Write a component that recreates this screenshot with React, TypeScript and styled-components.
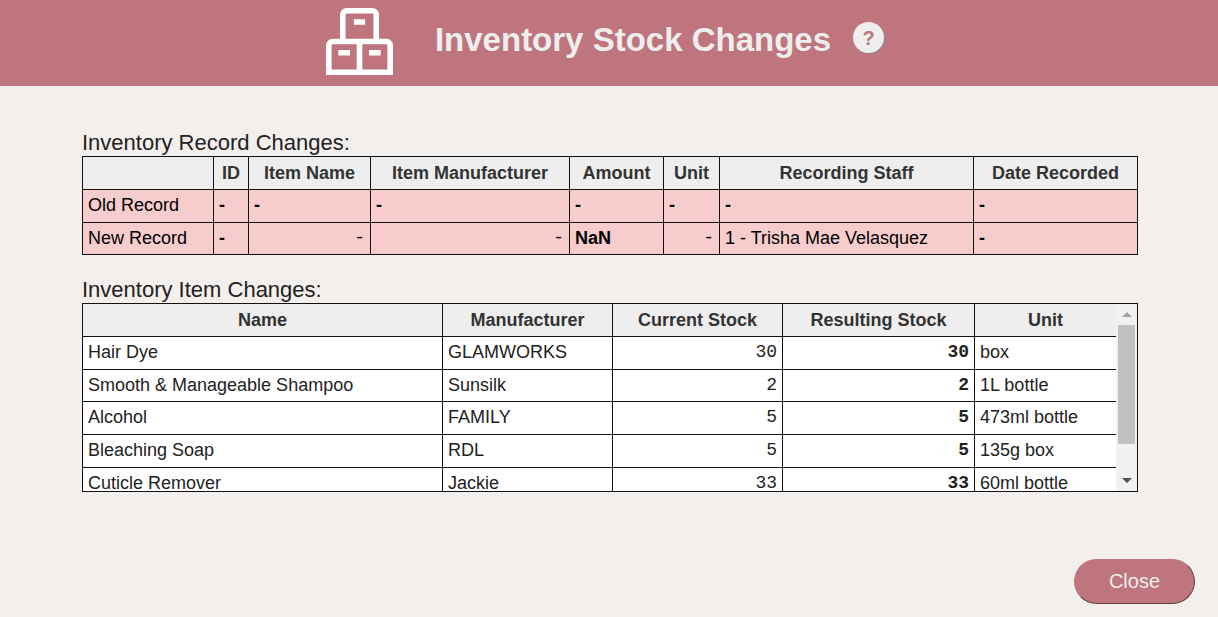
import React, { useRef } from 'react';
import styled, { createGlobalStyle } from 'styled-components';

const GlobalStyle = createGlobalStyle`
  *, *::before, *::after { box-sizing: border-box; }
  body {
    margin: 0;
    background: #f3efec;
    color: #222;
    font-family: "Liberation Sans", Arial, sans-serif;
    font-size: 18px;
    line-height: 20px;
  }
`;

const Page = styled.div`
  min-height: 100vh;
  display: flex;
  flex-direction: column;
`;

const Header = styled.header`
  display: flex;
  justify-content: center;
  align-items: flex-start;
  padding: 8px 8px 11px 0;
  background: #bf757d;
`;

const BoxesIcon = styled.svg`
  width: 67px;
  height: 67px;
  flex: none;
`;

const Title = styled.h1`
  margin: 12px 22px 0 42px;
  color: #eee;
  font-size: 33px;
  line-height: 40px;
`;

const HelpButton = styled.button`
  width: 31px;
  height: 31px;
  margin-top: 14px;
  padding: 0;
  border: 0;
  border-radius: 50%;
  background: #eee;
  box-shadow: 1px 1px 1px #8a8a8a;
  color: #bf757d;
  font: bold 20px/30px "Liberation Sans", Arial, sans-serif;
`;

const Main = styled.main`
  display: flex;
  flex-direction: column;
  gap: 22px;
  padding: 44px 80px 24px 82px;
`;

const SectionTitle = styled.h2`
  margin: 0;
  font-size: 22px;
  font-weight: 400;
  line-height: 26px;
`;

const Frame = styled.div<{ $height?: number }>`
  display: flex;
  height: ${(p) => (p.$height ? `${p.$height}px` : 'auto')};
  border: 1px solid #111;
  border-bottom-width: ${(p) => (p.$height ? 1 : 0)}px;
  background: #fff;
`;

const Scroller = styled.div`
  flex: 1;
  min-width: 0;
  overflow-y: auto;
  scrollbar-width: none;
`;

const Table = styled.table`
  width: 100%;
  table-layout: fixed;
  border-collapse: separate;
  border-spacing: 0;

  th, td {
    height: 33px;
    border-right: 1px solid #111;
    border-bottom: 1px solid #111;
  }
  tr > :last-child { border-right: 0; }
  tbody tr:nth-child(2) > * { height: 32px; }
`;

const HeadCell = styled.th`
  padding: 0 5px;
  background: #eee;
  color: #333;
  text-align: center;
`;

const Cell = styled.td<{ $changed?: boolean; $numeric?: boolean; $bold?: boolean }>`
  padding: 0 5px 2px;
  background: ${(p) => (p.$changed ? '#f6cccc' : '#fff')};
  color: ${(p) => (p.$changed ? '#000' : '#222')};
  font-family: ${(p) => (p.$numeric ? '"Liberation Mono", "Courier New", monospace' : 'inherit')};
  font-weight: ${(p) => (p.$bold ? 700 : 400)};
  text-align: ${(p) => (p.$numeric ? 'right' : 'left')};
  white-space: nowrap;
`;

const RowHead = styled(Cell).attrs({ as: 'th', scope: 'row' })``;

const ScrollBar = styled.div`
  display: flex;
  flex-direction: column;
  width: 21px;
  padding: 0 2px;
  background: #f1f1f1;
`;

const ScrollButton = styled.button`
  display: flex;
  align-items: center;
  justify-content: center;
  height: 21px;
  padding: 0;
  border: 0;
  background: transparent;
`;

const Track = styled.div`
  flex: 1;
`;

const Thumb = styled.div`
  height: 82%;
  background: #c1c1c1;
`;

const Footer = styled.footer`
  display: flex;
  justify-content: flex-end;
  margin-top: auto;
  padding: 0 23px 13px;
`;

const CloseButton = styled.button`
  width: 121px;
  height: 45px;
  padding: 0 0 2px;
  border: 1px outset #bf757d;
  border-radius: 23px;
  background: #bf757d;
  color: #eee;
  font: 20px/24px "Liberation Sans", Arial, sans-serif;
`;

type Column = { label: string; width: number };

const recordColumns: Column[] = [
  { label: '', width: 131 },
  { label: 'ID', width: 35 },
  { label: 'Item Name', width: 122 },
  { label: 'Item Manufacturer', width: 199 },
  { label: 'Amount', width: 94 },
  { label: 'Unit', width: 56 },
  { label: 'Recording Staff', width: 254 },
  { label: 'Date Recorded', width: 163 },
];

const itemColumns: Column[] = [
  { label: 'Name', width: 360 },
  { label: 'Manufacturer', width: 170 },
  { label: 'Current Stock', width: 170 },
  { label: 'Resulting Stock', width: 192 },
  { label: 'Unit', width: 141 },
];

const items = [
  { name: 'Hair Dye', maker: 'GLAMWORKS', current: 30, result: 30, unit: 'box' },
  { name: 'Smooth & Manageable Shampoo', maker: 'Sunsilk', current: 2, result: 2, unit: '1L bottle' },
  { name: 'Alcohol', maker: 'FAMILY', current: 5, result: 5, unit: '473ml bottle' },
  { name: 'Bleaching Soap', maker: 'RDL', current: 5, result: 5, unit: '135g box' },
  { name: 'Cuticle Remover', maker: 'Jackie', current: 33, result: 33, unit: '60ml bottle' },
];

function TableHead({ columns }: { columns: Column[] }) {
  return (
    <>
      <colgroup>
        {columns.map((c) => (
          <col key={c.label} width={c.width} />
        ))}
      </colgroup>
      <thead>
        <tr>
          {columns.map((c) => (
            <HeadCell key={c.label} scope="col">{c.label}</HeadCell>
          ))}
        </tr>
      </thead>
    </>
  );
}

export default function App() {
  const scroller = useRef<HTMLDivElement>(null);
  const scrollBy = (top: number) => scroller.current?.scrollBy({ top });

  return (
    <Page>
      <GlobalStyle />
      <Header>
        <BoxesIcon viewBox="0 0 24 24" fill="none" stroke="#fff" strokeWidth="2" aria-hidden="true">
          <path d="M6 12V2.4A1.4 1.4 0 0 1 7.4 1h9.2A1.4 1.4 0 0 1 18 2.4V12" />
          <path d="M1 23V13.4A1.4 1.4 0 0 1 2.4 12h19.2a1.4 1.4 0 0 1 1.4 1.4V23zM12 12v11" />
          <path d="M10 5h4M4.4 16h4.2M15.4 16h4.2" />
        </BoxesIcon>
        <Title>Inventory Stock Changes</Title>
        <HelpButton type="button" aria-label="Help">?</HelpButton>
      </Header>

      <Main>
        <section aria-labelledby="record-title">
          <SectionTitle id="record-title">Inventory Record Changes:</SectionTitle>
          <Frame>
            <Table aria-labelledby="record-title">
              <TableHead columns={recordColumns} />
              <tbody>
                <tr>
                  <RowHead $changed>Old Record</RowHead>
                  <Cell $changed $bold>-</Cell>
                  <Cell $changed $bold>-</Cell>
                  <Cell $changed $bold>-</Cell>
                  <Cell $changed $bold>-</Cell>
                  <Cell $changed $bold>-</Cell>
                  <Cell $changed $bold>-</Cell>
                  <Cell $changed $bold>-</Cell>
                </tr>
                <tr>
                  <RowHead $changed>New Record</RowHead>
                  <Cell $changed $bold>-</Cell>
                  <Cell $changed $numeric>-</Cell>
                  <Cell $changed $numeric>-</Cell>
                  <Cell $changed $bold>NaN</Cell>
                  <Cell $changed $numeric>-</Cell>
                  <Cell $changed>1 - Trisha Mae Velasquez</Cell>
                  <Cell $changed $bold>-</Cell>
                </tr>
              </tbody>
            </Table>
          </Frame>
        </section>

        <section aria-labelledby="item-title">
          <SectionTitle id="item-title">Inventory Item Changes:</SectionTitle>
          <Frame $height={189}>
            <Scroller ref={scroller}>
              <Table aria-labelledby="item-title">
                <TableHead columns={itemColumns} />
                <tbody>
                  {items.map((item) => (
                    <tr key={item.name}>
                      <Cell>{item.name}</Cell>
                      <Cell>{item.maker}</Cell>
                      <Cell $numeric>{item.current}</Cell>
                      <Cell $numeric $bold>{item.result}</Cell>
                      <Cell>{item.unit}</Cell>
                    </tr>
                  ))}
                </tbody>
              </Table>
            </Scroller>
            <ScrollBar>
              <ScrollButton type="button" aria-label="Scroll up" onClick={() => scrollBy(-33)}>
                <svg width="10" height="5" viewBox="0 0 10 5"><path d="M0 5L5 0l5 5z" fill="#a3a3a3" /></svg>
              </ScrollButton>
              <Track><Thumb /></Track>
              <ScrollButton type="button" aria-label="Scroll down" onClick={() => scrollBy(33)}>
                <svg width="10" height="5" viewBox="0 0 10 5"><path d="M0 0h10L5 5z" fill="#505050" /></svg>
              </ScrollButton>
            </ScrollBar>
          </Frame>
        </section>
      </Main>

      <Footer>
        <CloseButton type="button">Close</CloseButton>
      </Footer>
    </Page>
  );
}
